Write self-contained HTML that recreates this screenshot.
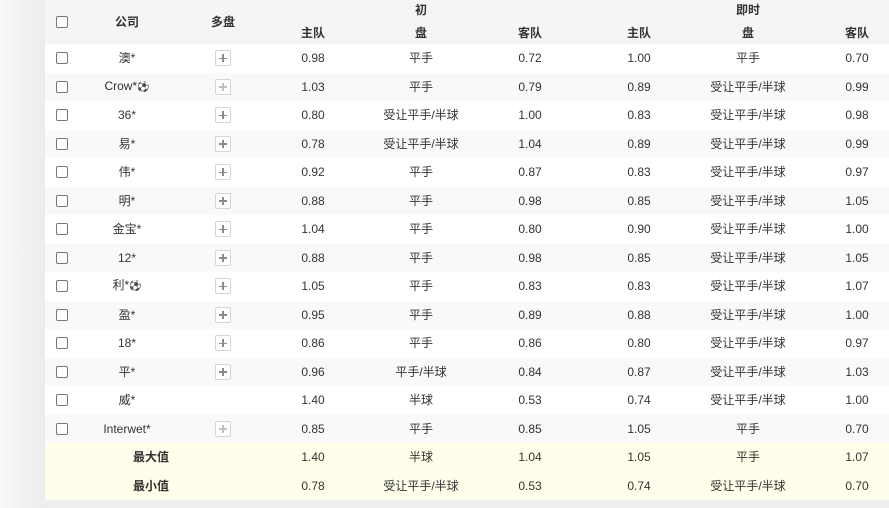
<!DOCTYPE html>
<html><head><meta charset="utf-8"><style>
*{margin:0;padding:0;box-sizing:border-box}
body{width:889px;height:508px;overflow:hidden;background:#eeeeee;font-family:"Liberation Sans","Noto Sans CJK SC",sans-serif;font-size:12px;color:#333;position:relative}
.lg{position:absolute;left:0;top:0;width:45px;height:508px;background:linear-gradient(90deg,#f8f8f8,#ececec)}
.t{position:absolute;left:45px;top:0;width:844px;height:500px;background:#fff}
.r{position:absolute;left:0;width:844px;height:28.5px}
.c{position:absolute;width:140px;margin-left:-70px;text-align:center;top:50%;transform:translateY(-50%);white-space:nowrap;line-height:14px}
.cb{position:absolute;left:11px;top:50%;margin-top:-6px;width:12px;height:12px;border:1px solid #777;border-radius:2px;background:#fff}
.pl{position:absolute;left:170px;top:50%;margin-top:-8px;width:16px;height:16px;border:1px solid #d6d6d6;border-radius:2px;background:#fff}
.pl:before{content:"";position:absolute;left:3px;top:6.5px;width:8px;height:1.5px;background:#8a8a8a}
.pl:after{content:"";position:absolute;left:6.25px;top:3px;width:1.5px;height:8px;background:#8a8a8a}
.pl.l:before,.pl.l:after{background:#c0c0c0}
b{font-weight:bold}
.h{background:#f5f5f5}
.y{background:#fefeea}
.g{background:#f9f9f9}
.a{left:82px}.p1{left:268px}.p2{left:376px}.p3{left:485px}.p4{left:594px}.p5{left:703px}.p6{left:812px}
.ball{font-size:10px;font-family:"DejaVu Sans",sans-serif}
</style></head><body>
<div class="lg"></div>
<div class="t">
<div class="r h" style="top:0;height:44px">
<div class="cb"></div>
<b class="c a">公司</b>
<b class="c" style="left:178px">多盘</b>
<b class="c p2" style="top:10px">初</b>
<b class="c p5" style="top:10px">即时</b>
<b class="c p1" style="top:33px">主队</b>
<b class="c p2" style="top:33px">盘</b>
<b class="c p3" style="top:33px">客队</b>
<b class="c p4" style="top:33px">主队</b>
<b class="c p5" style="top:33px">盘</b>
<b class="c p6" style="top:33px">客队</b>
</div>

<div class="r" style="top:44px"><div class="cb"></div><span class="c a">澳*</span><div class="pl"></div><span class="c p1">0.98</span><span class="c p2">平手</span><span class="c p3">0.72</span><span class="c p4">1.00</span><span class="c p5">平手</span><span class="c p6">0.70</span></div>
<div class="r g" style="top:72.5px"><div class="cb"></div><span class="c a">Crow*<span class="ball">⚽</span></span><div class="pl l"></div><span class="c p1">1.03</span><span class="c p2">平手</span><span class="c p3">0.79</span><span class="c p4">0.89</span><span class="c p5">受让平手/半球</span><span class="c p6">0.99</span></div>
<div class="r" style="top:101px"><div class="cb"></div><span class="c a">36*</span><div class="pl"></div><span class="c p1">0.80</span><span class="c p2">受让平手/半球</span><span class="c p3">1.00</span><span class="c p4">0.83</span><span class="c p5">受让平手/半球</span><span class="c p6">0.98</span></div>
<div class="r g" style="top:129.5px"><div class="cb"></div><span class="c a">易*</span><div class="pl"></div><span class="c p1">0.78</span><span class="c p2">受让平手/半球</span><span class="c p3">1.04</span><span class="c p4">0.89</span><span class="c p5">受让平手/半球</span><span class="c p6">0.99</span></div>
<div class="r" style="top:158px"><div class="cb"></div><span class="c a">伟*</span><div class="pl"></div><span class="c p1">0.92</span><span class="c p2">平手</span><span class="c p3">0.87</span><span class="c p4">0.83</span><span class="c p5">受让平手/半球</span><span class="c p6">0.97</span></div>
<div class="r g" style="top:186.5px"><div class="cb"></div><span class="c a">明*</span><div class="pl"></div><span class="c p1">0.88</span><span class="c p2">平手</span><span class="c p3">0.98</span><span class="c p4">0.85</span><span class="c p5">受让平手/半球</span><span class="c p6">1.05</span></div>
<div class="r" style="top:215px"><div class="cb"></div><span class="c a">金宝*</span><div class="pl"></div><span class="c p1">1.04</span><span class="c p2">平手</span><span class="c p3">0.80</span><span class="c p4">0.90</span><span class="c p5">受让平手/半球</span><span class="c p6">1.00</span></div>
<div class="r g" style="top:243.5px"><div class="cb"></div><span class="c a">12*</span><div class="pl"></div><span class="c p1">0.88</span><span class="c p2">平手</span><span class="c p3">0.98</span><span class="c p4">0.85</span><span class="c p5">受让平手/半球</span><span class="c p6">1.05</span></div>
<div class="r" style="top:272px"><div class="cb"></div><span class="c a">利*<span class="ball">⚽</span></span><div class="pl"></div><span class="c p1">1.05</span><span class="c p2">平手</span><span class="c p3">0.83</span><span class="c p4">0.83</span><span class="c p5">受让平手/半球</span><span class="c p6">1.07</span></div>
<div class="r g" style="top:300.5px"><div class="cb"></div><span class="c a">盈*</span><div class="pl"></div><span class="c p1">0.95</span><span class="c p2">平手</span><span class="c p3">0.89</span><span class="c p4">0.88</span><span class="c p5">受让平手/半球</span><span class="c p6">1.00</span></div>
<div class="r" style="top:329px"><div class="cb"></div><span class="c a">18*</span><div class="pl"></div><span class="c p1">0.86</span><span class="c p2">平手</span><span class="c p3">0.86</span><span class="c p4">0.80</span><span class="c p5">受让平手/半球</span><span class="c p6">0.97</span></div>
<div class="r g" style="top:357.5px"><div class="cb"></div><span class="c a">平*</span><div class="pl"></div><span class="c p1">0.96</span><span class="c p2">平手/半球</span><span class="c p3">0.84</span><span class="c p4">0.87</span><span class="c p5">受让平手/半球</span><span class="c p6">1.03</span></div>
<div class="r" style="top:386px"><div class="cb"></div><span class="c a">威*</span><span class="c p1">1.40</span><span class="c p2">半球</span><span class="c p3">0.53</span><span class="c p4">0.74</span><span class="c p5">受让平手/半球</span><span class="c p6">1.00</span></div>
<div class="r g" style="top:414.5px"><div class="cb"></div><span class="c a">Interwet*</span><div class="pl l"></div><span class="c p1">0.85</span><span class="c p2">平手</span><span class="c p3">0.85</span><span class="c p4">1.05</span><span class="c p5">平手</span><span class="c p6">0.70</span></div>
<div class="r y" style="top:443px"><b class="c" style="left:106px">最大值</b><span class="c p1">1.40</span><span class="c p2">半球</span><span class="c p3">1.04</span><span class="c p4">1.05</span><span class="c p5">平手</span><span class="c p6">1.07</span></div>
<div class="r y" style="top:471.5px"><b class="c" style="left:106px">最小值</b><span class="c p1">0.78</span><span class="c p2">受让平手/半球</span><span class="c p3">0.53</span><span class="c p4">0.74</span><span class="c p5">受让平手/半球</span><span class="c p6">0.70</span></div>
</div>
</body></html>
